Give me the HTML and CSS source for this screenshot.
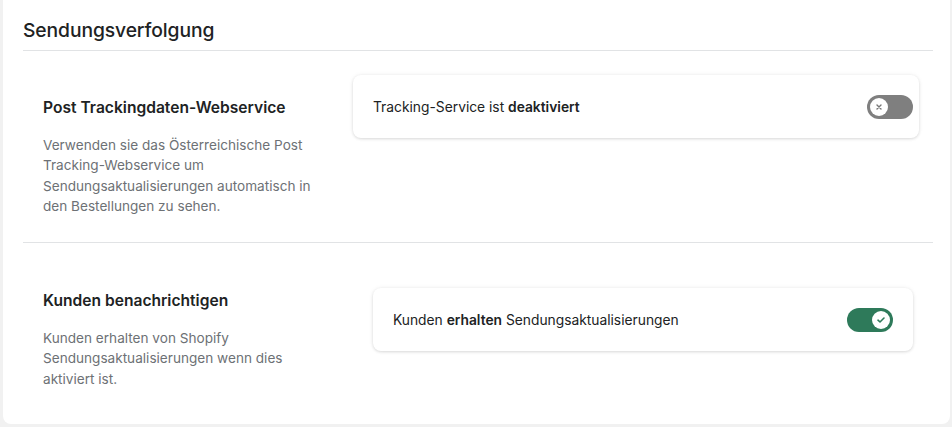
FILE: index.html
```html
<!DOCTYPE html>
<html lang="de">
<head>
<meta charset="utf-8">
<link rel="stylesheet" href="styles.css">
</head>
<body>
<div class="panel">
  <h1 class="panel-title">Sendungsverfolgung</h1>
  <div class="section section-first">
    <div class="info info-first">
      <h2 class="info-title">Post Trackingdaten-Webservice</h2>
      <p class="info-text">Verwenden sie das Österreichische Post Tracking-Webservice um Sendungsaktualisierungen automatisch in den Bestellungen zu sehen.</p>
    </div>
    <div class="setting setting-first">
      <span class="setting-label">Tracking-Service ist <b>deaktiviert</b></span>
      <span class="toggle toggle-off"><span class="knob"><svg width="8" height="8" viewBox="0 0 8 8"><path d="M2 2L6 6M6 2L2 6" stroke="#777" stroke-width="1.4" stroke-linecap="round"/></svg></span></span>
    </div>
  </div>
  <div class="section section-second">
    <div class="info info-second">
      <h2 class="info-title">Kunden benachrichtigen</h2>
      <p class="info-text">Kunden erhalten von Shopify Sendungsaktualisierungen wenn dies aktiviert ist.</p>
    </div>
    <div class="setting setting-second">
      <span class="setting-label">Kunden <b>erhalten</b> Sendungsaktualisierungen</span>
      <span class="toggle toggle-on"><span class="knob"><svg width="10" height="8" viewBox="0 0 10 8"><path d="M2 4.2L4 6L8 2" fill="none" stroke="#2e7a5a" stroke-width="1.6" stroke-linecap="round" stroke-linejoin="round"/></svg></span></span>
    </div>
  </div>
</div>
</body>
</html>
```
FILE: styles.css
```css
* { box-sizing: border-box; }
html, body { margin: 0; padding: 0; }
body {
  background: #f1f1f1;
  font-family: Inter, "Noto Sans", "Liberation Sans", sans-serif;
  color: #202223;
  width: 952px;
  height: 427px;
  overflow: hidden;
}
.panel {
  margin-left: 3px;
  width: 947px;
  height: 424px;
  background: #fff;
  border-radius: 0 0 8px 8px;
  padding: 16px 17px 0 20px;
}
.panel-title {
  margin: 0;
  font-size: 19.3px;
  font-weight: 500;
  line-height: 28px;
  padding-bottom: 6px;
  border-bottom: 1px solid #e1e3e5;
  letter-spacing: -0.1px;
}
.section {
  display: flex;
  align-items: flex-start;
  padding-left: 20px;
}
.section-first {
  padding-top: 24px;
  padding-bottom: 26px;
  border-bottom: 1px solid #e1e3e5;
}
.section-second {
  padding-top: 45px;
}
.info-first { width: 310px; padding-top: 21px; }
.info-second { width: 330px; padding-top: 1px; }
.info-title {
  margin: 0;
  font-size: 15.6px;
  font-weight: 600;
  line-height: 24px;
}
.info-text {
  margin: 15px 0 0;
  font-size: 13.6px;
  line-height: 20.3px;
  color: #6d7175;
}
.info-first .info-text { width: 285px; }
.info-second .info-text { width: 280px; }
.setting {
  display: flex;
  align-items: center;
  justify-content: space-between;
  height: 63px;
  background: #fff;
  border-radius: 8px;
  box-shadow: 0 0 5px rgba(0,0,0,0.06), 0 1px 3px rgba(0,0,0,0.12);
  padding-left: 20px;
  font-size: 13.8px;
  color: #202223;
}
.setting b { font-weight: 600; }
.setting-first { width: 566px; padding-right: 6px; }
.setting-second { width: 540px; padding-right: 20px; }
.toggle {
  display: flex;
  align-items: center;
  width: 46px;
  height: 24px;
  border-radius: 12px;
  padding: 0 3px;
}
.toggle-off { background: #7f7f7f; justify-content: flex-start; }
.toggle-on { background: #2e7a5a; justify-content: flex-end; }
.knob {
  width: 18px;
  height: 18px;
  border-radius: 50%;
  background: #fff;
  display: flex;
  align-items: center;
  justify-content: center;
}
```
